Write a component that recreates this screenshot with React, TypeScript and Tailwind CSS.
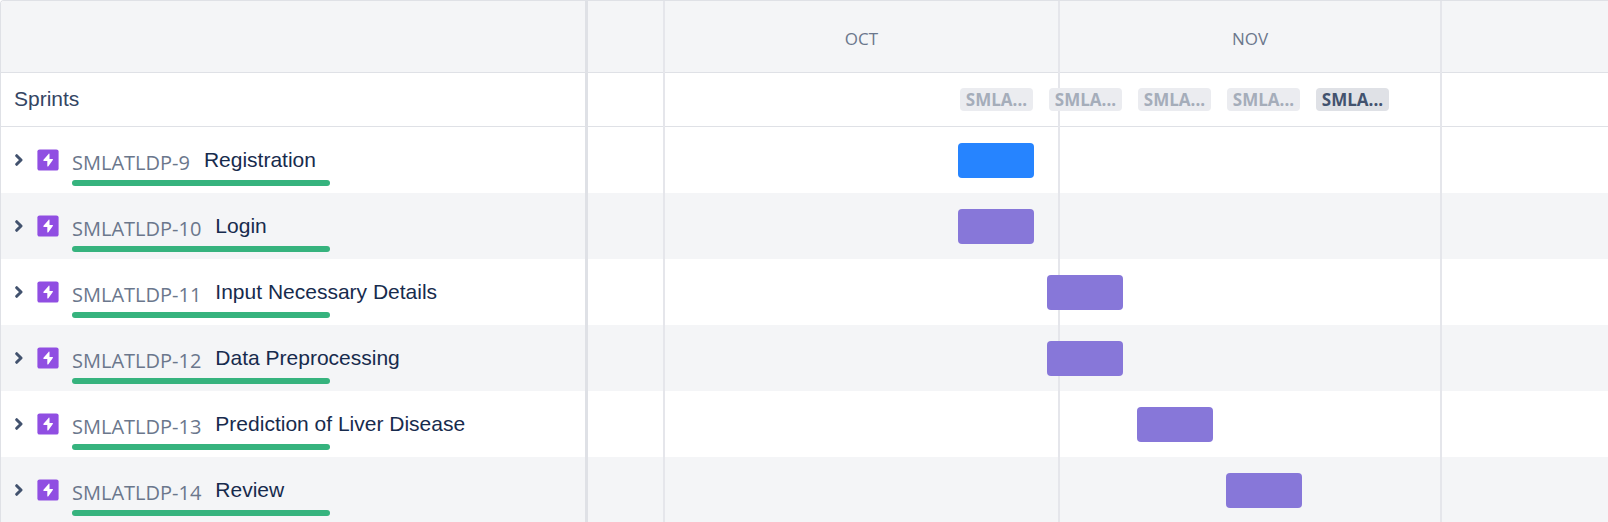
type Epic = {
  id: string;
  title: string;
  sprint: number;
  color: string;
};

// Timeline scale in pixels: one sprint per week.
const WEEK_WIDTH = 89.3;
const FIRST_SPRINT_OFFSET = 370;

const sprintOffset = (index: number) => FIRST_SPRINT_OFFSET + Math.round(index * WEEK_WIDTH);

const epics: Epic[] = [
  { id: "SMLATLDP-9", title: "Registration", sprint: 0, color: "bg-[#2684ff]" },
  { id: "SMLATLDP-10", title: "Login", sprint: 0, color: "bg-[#8777d9]" },
  { id: "SMLATLDP-11", title: "Input Necessary Details", sprint: 1, color: "bg-[#8777d9]" },
  { id: "SMLATLDP-12", title: "Data Preprocessing", sprint: 1, color: "bg-[#8777d9]" },
  { id: "SMLATLDP-13", title: "Prediction of Liver Disease", sprint: 2, color: "bg-[#8777d9]" },
  { id: "SMLATLDP-14", title: "Review", sprint: 3, color: "bg-[#8777d9]" },
];

const sprints = [
  { id: 0, tone: "bg-[#ebecf0] text-[#a5adba]" },
  { id: 1, tone: "bg-[#ebecf0] text-[#a5adba]" },
  { id: 2, tone: "bg-[#ebecf0] text-[#a5adba]" },
  { id: 3, tone: "bg-[#ebecf0] text-[#a5adba]" },
  { id: 4, tone: "bg-[#dfe1e6] text-[#42526e]" },
];

function ChevronIcon() {
  return (
    <svg viewBox="0 0 8 12" className="h-3 w-2" fill="none" stroke="#42526e" strokeWidth="3" strokeLinecap="round" strokeLinejoin="round">
      <path d="M1.7 1.7 6 6 1.7 10.3" />
    </svg>
  );
}

function EpicIcon() {
  return (
    <svg viewBox="0 0 22 22" className="size-[22px] shrink-0">
      <rect x="0.4" y="0.4" width="21.2" height="21.2" rx="2.2" fill="#904ee2" />
      <path
        d="M11.6 4.9 6.5 10.8c-.5.6-.2 1.2.5 1.2h3.3v4.9c0 .7.6.9 1.1.3l4.4-6.1c.4-.6.1-1.2-.5-1.2h-2.8V5.2c0-.7-.5-.8-.9-.3Z"
        fill="#fff"
      />
    </svg>
  );
}

function EpicRow({ epic }: { epic: Epic }) {
  return (
    <li className="flex h-[66px] items-start even:bg-[#f4f5f7]">
      <div className="flex h-full items-center pl-[14px]">
        <button type="button" aria-expanded="false" aria-label={epic.title} className="mr-[14px] flex">
          <ChevronIcon />
        </button>
        <EpicIcon />
      </div>
      <div className="ml-[13px] pt-[21px]">
        <div className="flex items-start gap-[14px] whitespace-nowrap">
          <a href="#" className="mt-[3px] font-['Open_Sans',sans-serif] text-[20px] leading-6 text-[#6b778c]">
            {epic.id}
          </a>
          <span className="text-[21px] leading-6 text-[#172b4d]">{epic.title}</span>
        </div>
        <div className="mt-[5px] h-[6px] w-[258px] rounded-full bg-[#36b37e]" />
      </div>
    </li>
  );
}

export default function App() {
  return (
    <main className="flex h-screen overflow-hidden rounded-tl-[4px] border-t border-l border-[#dfe1e6] bg-white font-['Liberation_Sans',Arial,sans-serif]">
      <section className="w-[587px] shrink-0 border-r-3 border-[#dfe1e6]">
        <div className="h-[72px] border-b border-[#dfe1e6] bg-[#f4f5f7]" />
        <h2 className="flex h-[54px] items-center border-b border-[#dfe1e6] pb-[2px] pl-[13px] text-[21px] leading-6 text-[#344563]">
          Sprints
        </h2>
        <ul>
          {epics.map((epic) => (
            <EpicRow key={epic.id} epic={epic} />
          ))}
        </ul>
      </section>

      <section className="relative min-w-0 grow overflow-hidden">
        <div className="h-[72px] border-b border-[#dfe1e6] bg-[#f4f5f7]" />
        <div className="h-[54px] border-b border-[#dfe1e6]" />
        <div>
          {epics.map((epic) => (
            <div key={epic.id} className="h-[66px] even:bg-[#f4f5f7]" />
          ))}
        </div>

        {/* Month columns lie over the row stripes */}
        <div className="absolute inset-0 grid grid-cols-[75px_395px_382px_1fr] font-['Open_Sans',sans-serif] text-[17px] leading-6 text-[#6b778c]">
          <div />
          <div className="border-l-2 border-[#e5e6eb] pt-[26px] text-center">OCT</div>
          <div className="border-l-2 border-[#e5e6eb] pt-[26px] text-center">NOV</div>
          <div className="border-l-2 border-[#e5e6eb]" />
        </div>

        {/* Sprints and bars lie over the month lines */}
        <div className="absolute inset-x-0 top-[72px]">
          <div className="flex h-[54px] items-center gap-4 pb-px" style={{ paddingLeft: sprintOffset(0) + 2 }}>
            {sprints.map((sprint) => (
              <button
                key={sprint.id}
                type="button"
                className={`flex h-[23px] w-[73px] shrink-0 items-center justify-center rounded-sm font-['Open_Sans',sans-serif] text-[17px] leading-6 font-bold ${sprint.tone}`}
              >
                SMLA...
              </button>
            ))}
          </div>
          {epics.map((epic) => (
            <div key={epic.id} className="flex h-[66px] items-center">
              <div
                className={`h-[35px] w-[76px] shrink-0 rounded-sm ${epic.color}`}
                style={{ marginLeft: sprintOffset(epic.sprint) }}
              />
            </div>
          ))}
        </div>
      </section>
    </main>
  );
}
